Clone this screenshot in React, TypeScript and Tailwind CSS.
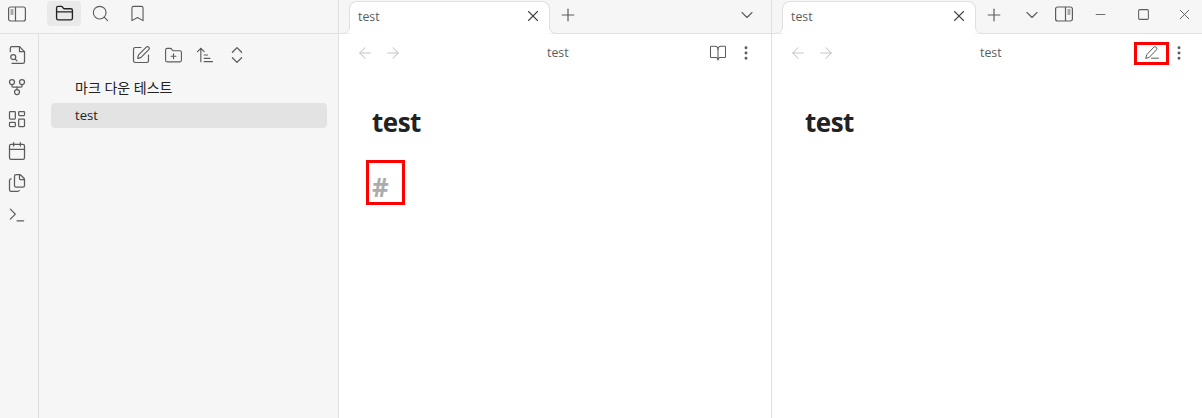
import {
  ArrowLeft,
  ArrowRight,
  ArrowUpNarrowWide,
  Bookmark,
  BookOpen,
  Calendar,
  ChevronDown,
  ChevronsUpDown,
  Files,
  FolderClosed,
  FolderPlus,
  GitFork,
  LayoutDashboard,
  Minus,
  MoreVertical,
  Plus,
  Search,
  Square,
  SquarePen,
  Terminal,
  X,
} from "lucide-react";

function SidebarIcon({ flip = false }: { flip?: boolean }) {
  return (
    <svg width="18" height="18" viewBox="0 0 18 18" fill="none" stroke="#5c5c5c" strokeWidth="1.2" className={flip ? "-scale-x-100" : ""}>
      <rect x="0.6" y="2" width="16.8" height="14" rx="2" />
      <path d="M7.5 2v14" />
      <path d="M2.5 5h3M2.5 7h3M2.5 9h3" strokeWidth="1" />
    </svg>
  );
}

function FileSearchIcon() {
  return (
    <svg width="20" height="20" viewBox="0 0 24 24" fill="none" stroke="#5c5c5c" strokeWidth="1.5" strokeLinecap="round" strokeLinejoin="round">
      <path d="M4 8V4a2 2 0 0 1 2-2h9l6 6v12a2 2 0 0 1-2 2H6" />
      <path d="M15 2v6h6" />
      <circle cx="7.5" cy="14.5" r="3" />
      <path d="m10 17 2 2" />
    </svg>
  );
}

function PencilIcon() {
  return (
    <svg width="16" height="16" viewBox="0 0 16 16" fill="none" stroke="#5c5c5c" strokeWidth="1" strokeLinecap="round" strokeLinejoin="round">
      <path d="M1.8 13 2.8 9.6 9.8 2.2Q10.9 1.2 12 2.2L12.6 2.8Q13.4 3.8 12.5 4.8L5.4 12.2Z" />
      <path d="M7.5 13.2h7" />
    </svg>
  );
}

function Tab({ width }: { width: string }) {
  return (
    <div className={`relative -mb-px mt-px flex h-[33px] ${width} items-start rounded-t-lg border border-b-0 border-[#e0e0e0] bg-white pl-[8px] pr-[7px] pt-[6px]`}>
      <span className="text-[12.3px] leading-[17px] text-[#5c5c5c]">test</span>
      <X size={18} strokeWidth={1.5} className="-mt-[1px] ml-auto text-[#444444]" />
      <svg width="8" height="8" viewBox="0 0 8 8" className="absolute -left-[8px] bottom-0" fill="white" stroke="#e0e0e0">
        <path d="M8 0C8 5 5 7.5 0 7.5H8Z" stroke="none" />
        <path d="M7.5 0C7.5 5 5 7.5 0 7.5" fill="none" />
      </svg>
      <svg width="8" height="8" viewBox="0 0 8 8" className="absolute -right-[8px] bottom-0" fill="white" stroke="#e0e0e0">
        <path d="M0 0C0 5 3 7.5 8 7.5H0Z" stroke="none" />
        <path d="M0.5 0C0.5 5 3 7.5 8 7.5" fill="none" />
      </svg>
    </div>
  );
}

function ViewHeader({ endPadding, action }: { endPadding: string; action: React.ReactNode }) {
  return (
    <div className={`flex h-[38px] items-center pl-[17px] ${endPadding}`}>
      <ArrowLeft size={18} strokeWidth={1.4} className="text-[#c4c4c4]" />
      <ArrowRight size={18} strokeWidth={1.4} className="ml-[10px] text-[#c4c4c4]" />
      <span className="ml-[145px] text-[12.3px] text-[#5c5c5c]">test</span>
      <div className="ml-auto flex items-center">
        {action}
        <MoreVertical size={18} strokeWidth={1.9} className="text-[#5c5c5c]" />
      </div>
    </div>
  );
}

export default function App() {
  const ribbon = [GitFork, LayoutDashboard, Calendar, Files, Terminal];
  const tools = [
    { Icon: SquarePen, size: 20 },
    { Icon: FolderPlus, size: 19 },
    { Icon: ArrowUpNarrowWide, size: 20 },
    { Icon: ChevronsUpDown, size: 22 },
  ];

  return (
    <div className="flex h-[418px] w-[1202px] overflow-hidden bg-white font-['Open_Sans','Noto_Sans_CJK_KR',sans-serif]">
      {/* left column */}
      <div className="flex w-[339px] flex-col border-r border-[#e0e0e0] bg-[#f6f6f6]">
        <div className="flex h-[34px] shrink-0 items-start border-b border-[#e0e0e0]">
          <div className="ml-[8px] mt-[5px]">
            <SidebarIcon />
          </div>
          <div className="ml-[21px] mt-px flex h-[25px] w-[34px] items-center justify-center rounded bg-[#e9e9e9]">
            <FolderClosed size={19} strokeWidth={1.7} className="text-[#222222]" />
          </div>
          <Search size={19} strokeWidth={1.4} className="ml-[10px] mt-[4px] text-[#5c5c5c]" />
          <Bookmark size={19} strokeWidth={1.4} className="ml-[18px] mt-[4px] text-[#5c5c5c]" />
        </div>
        <div className="flex flex-1">
          <div className="flex w-[39px] shrink-0 flex-col gap-[12px] border-r border-[#e0e0e0] pl-[7px] pt-[11px]">
            <FileSearchIcon />
            {ribbon.map((Icon, i) => (
              <Icon key={i} size={20} strokeWidth={1.5} className="text-[#5c5c5c]" />
            ))}
          </div>
          <div className="flex flex-1 flex-col">
            <div className="mt-[10px] flex h-[22px] items-center pl-[86px]">
              {tools.map(({ Icon, size }, i) => (
                <div key={i} className="flex w-[32px] justify-center">
                  <Icon size={size} strokeWidth={1.4} className="text-[#5c5c5c]" />
                </div>
              ))}
            </div>
            <div className="pl-[12px] pr-[11px] pt-[9px]">
              <div className="flex h-[25px] items-center pl-[24px] text-[14px] text-[#222222]">마크 다운 테스트</div>
              <div className="mt-[3px] flex h-[25px] items-center rounded bg-[#e3e3e3] pl-[24px] text-[13px] text-[#222222]">test</div>
            </div>
          </div>
        </div>
      </div>

      {/* middle pane */}
      <div className="flex w-[433px] flex-col border-r border-[#e0e0e0]">
        <div className="flex h-[34px] shrink-0 items-start border-b border-[#e0e0e0] bg-[#f6f6f6] pl-[10px]">
          <Tab width="w-[201px]" />
          <Plus size={20} strokeWidth={1.4} className="ml-[8px] mt-[5px] text-[#5c5c5c]" />
          <ChevronDown size={20} strokeWidth={1.3} className="ml-[159px] mt-[5px] text-[#5c5c5c]" />
        </div>
        <ViewHeader
          endPadding="pr-[16px]"
          action={<BookOpen size={18} strokeWidth={1.4} className="mr-[10px] text-[#5c5c5c]" />}
        />
        <div className="pl-[33px] pt-[31px]">
          <h1 className="text-[26px] font-bold leading-[38px] tracking-[-0.5px] text-[#222222]">test</h1>
          <div className="-ml-[6px] mt-[19px] flex h-[45px] w-[39px] border-[3px] border-[#ff0000] pl-[3px] pt-[8px] text-[26px] font-bold leading-[32px] text-[#ababab]">#</div>
        </div>
      </div>

      {/* right pane */}
      <div className="flex flex-1 flex-col">
        <div className="flex h-[34px] shrink-0 items-start border-b border-[#e0e0e0] bg-[#f6f6f6] pl-[10px]">
          <Tab width="w-[194px]" />
          <Plus size={20} strokeWidth={1.4} className="ml-[8px] mt-[5px] text-[#5c5c5c]" />
          <ChevronDown size={20} strokeWidth={1.3} className="ml-[18px] mt-[5px] text-[#5c5c5c]" />
          <div className="ml-[13px] mt-[5px]">
            <SidebarIcon flip />
          </div>
          <Minus size={15} strokeWidth={1.4} className="ml-[20px] mt-[7px] text-[#5c5c5c]" />
          <Square size={13} strokeWidth={1.9} className="ml-[29px] mt-[8px] text-[#5c5c5c]" />
          <X size={17} strokeWidth={1.3} className="ml-[26px] mt-[6px] text-[#5c5c5c]" />
        </div>
        <ViewHeader
          endPadding="pr-[14px]"
          action={
            <div className="mr-px flex h-[23px] w-[35px] items-center justify-center border-[3px] border-[#ff0000]">
              <PencilIcon />
            </div>
          }
        />
        <div className="pl-[33px] pt-[31px]">
          <h1 className="text-[26px] font-bold leading-[38px] tracking-[-0.5px] text-[#222222]">test</h1>
        </div>
      </div>
    </div>
  );
}
